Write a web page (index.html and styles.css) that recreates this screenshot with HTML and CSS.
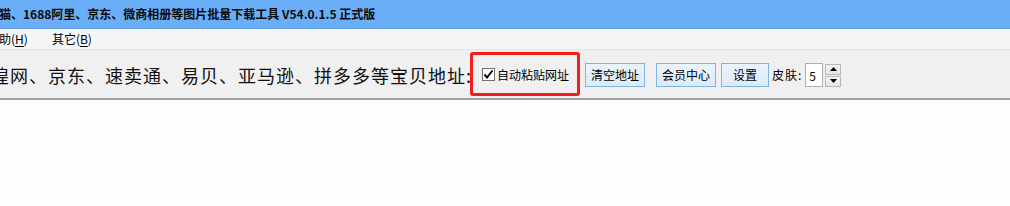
FILE: index.html
```html
<!DOCTYPE html>
<html lang="zh">
<head>
<meta charset="utf-8">
<link rel="stylesheet" href="styles.css">
</head>
<body>
<div class="window">
  <div class="titlebar"><span class="title">猫、1688阿里、京东、微商相册等图片批量下载工具 V54.0.1.5 正式版</span></div>
  <div class="menubar">
    <span class="menu menu-help">助(<u>H</u>)</span>
    <span class="menu menu-other">其它(<u>B</u>)</span>
  </div>
  <div class="toolbar">
    <span class="biglabel">煌网、京东、速卖通、易贝、亚马逊、拼多多等宝贝地址:</span>
    <div class="redbox">
      <span class="checkbox"><svg width="11" height="11" viewBox="0 0 11 11"><path d="M1.5 5.5 L4 8.5 L9.5 1.5" fill="none" stroke="#000" stroke-width="2"/></svg></span>
      <span class="cblabel">自动粘贴网址</span>
    </div>
    <button class="btn btn-wide">清空地址</button>
    <button class="btn btn-wide">会员中心</button>
    <button class="btn btn-narrow">设置</button>
    <span class="skinlabel">皮肤:</span>
    <span class="spinbox">5</span>
    <span class="spinner">
      <span class="spin up"><svg width="7" height="4" viewBox="0 0 7 4"><path d="M0 4 L3.5 0 L7 4 Z" fill="#000"/></svg></span>
      <span class="spin down"><svg width="7" height="4" viewBox="0 0 7 4"><path d="M0 0 L3.5 4 L7 0 Z" fill="#000"/></svg></span>
    </span>
  </div>
  <div class="content"></div>
</div>
</body>
</html>
```

FILE: styles.css
```css
html, body {
  margin: 0;
  padding: 0;
  background: #ffffff;
}
body {
  width: 1010px;
  height: 206px;
  overflow: hidden;
  font-family: "Noto Sans CJK SC", "Liberation Sans", sans-serif;
  color: #000;
}
.window {
  width: 1010px;
}
.titlebar {
  height: 28px;
  background: #6aaef7;
  border-bottom: 1px solid #5f98d8;
  display: flex;
  align-items: center;
  overflow: hidden;
  white-space: nowrap;
}
.title {
  font-size: 12px;
  font-weight: bold;
  color: #0a0a0a;
  margin-left: -1px;
  line-height: 16px;
}
.menubar {
  height: 20px;
  background: #f4f5f7;
  border-bottom: 1px solid #e4e4e4;
  display: flex;
  align-items: center;
  font-size: 12px;
  white-space: nowrap;
}
.menu {
  line-height: 16px;
}
.menu u {
  text-decoration-thickness: 1px;
  text-underline-offset: 2px;
}
.menu-help {
  margin-left: -1px;
}
.menu-other {
  margin-left: 24px;
}
.toolbar {
  height: 48px;
  background: #f0f0f0;
  border-bottom: 2px solid #a3a3a3;
  display: flex;
  align-items: center;
  white-space: nowrap;
  overflow: hidden;
}
.biglabel {
  font-size: 18px;
  letter-spacing: 1px;
  margin-left: -9px;
  width: 479px;
  flex: none;
  line-height: 22px;
  margin-top: 2px;
  color: #111;
  overflow: hidden;
}
.redbox {
  flex: none;
  box-sizing: border-box;
  width: 110px;
  height: 44px;
  margin-left: 0;
  margin-top: 0;
  border: 3px solid #f41c1c;
  border-radius: 3px;
  display: flex;
  align-items: center;
  padding-left: 9px;
  padding-top: 1px;
}
.checkbox {
  box-sizing: border-box;
  width: 13px;
  height: 13px;
  border: 1px solid #707070;
  background: #fff;
  display: flex;
  align-items: center;
  justify-content: center;
}
.cblabel {
  font-size: 12px;
  margin-left: 2px;
  line-height: 16px;
}
.btn {
  flex: none;
  box-sizing: border-box;
  height: 24px;
  padding: 0;
  margin: 2px 0 0 0;
  border: 1px solid #7fb4e6;
  background: linear-gradient(#e9f3fc, #dcebf9);
  font-family: "Noto Sans CJK SC", "Liberation Sans", sans-serif;
  font-size: 12px;
  color: #000;
  line-height: 16px;
}
.btn-wide {
  width: 60px;
  margin-left: 5px;
}
.btn + .btn-wide {
  margin-left: 11px;
}
.btn-narrow {
  width: 48px;
  margin-left: 5px;
}
.skinlabel {
  font-size: 12px;
  margin-left: 3px;
  margin-top: 2px;
  letter-spacing: 1px;
  line-height: 16px;
}
.spinbox {
  flex: none;
  box-sizing: border-box;
  width: 18px;
  height: 24px;
  margin-left: 3px;
  margin-top: 2px;
  border: 1px solid #abadb3;
  background: #fff;
  font-size: 12px;
  display: flex;
  align-items: center;
  padding-left: 3px;
}
.spinner {
  flex: none;
  display: flex;
  flex-direction: column;
  gap: 1px;
  margin-left: 2px;
  margin-top: 2px;
}
.spin {
  box-sizing: border-box;
  width: 16px;
  height: 11px;
  border: 1px solid #b9b9b9;
  background: linear-gradient(#f6f6f6, #e4e4e4);
  display: flex;
  align-items: center;
  justify-content: center;
}
.content {
  height: 106px;
  background: #fefefe;
}
```
